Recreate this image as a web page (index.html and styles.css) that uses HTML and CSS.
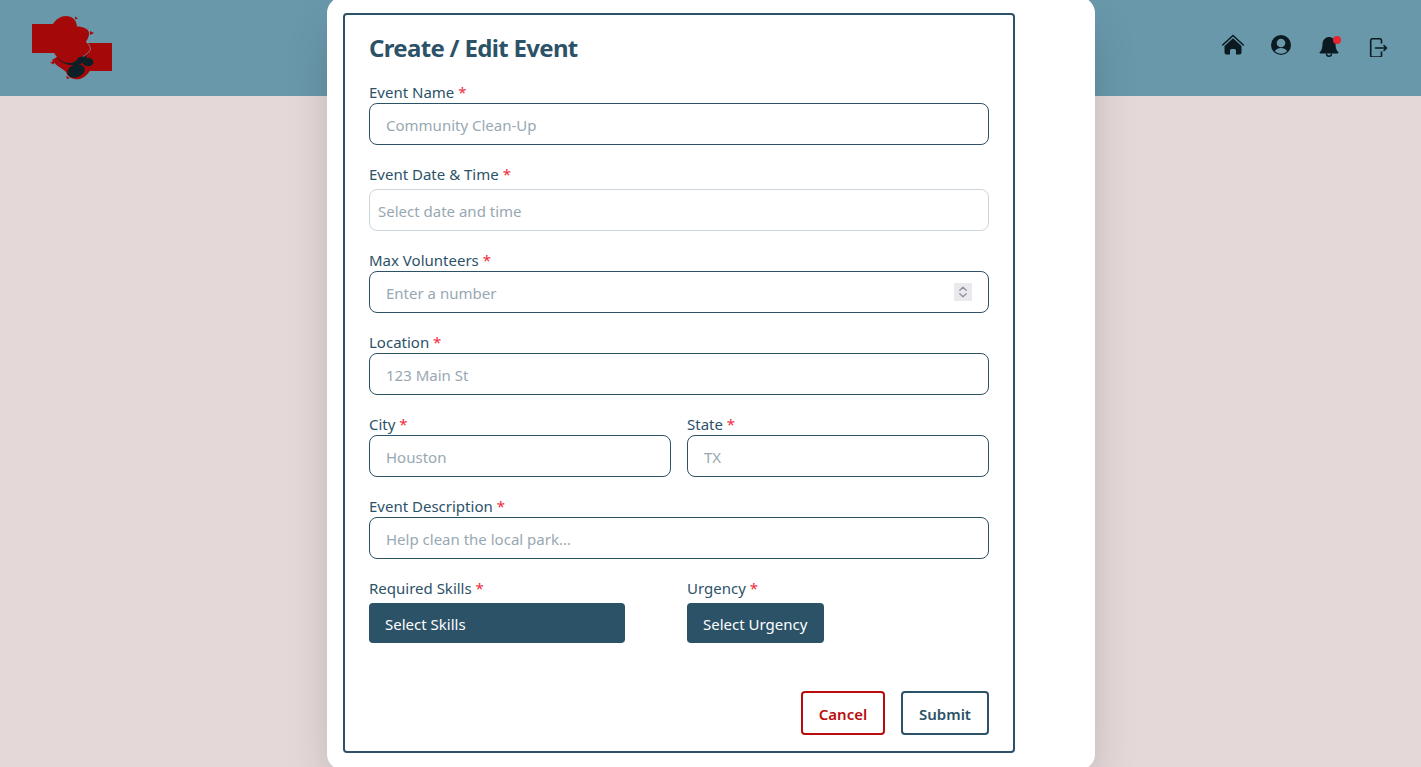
FILE: index.html
```html
<!DOCTYPE html>
<html lang="en">
<head>
<meta charset="utf-8">
<title>Create / Edit Event</title>
<link rel="stylesheet" href="styles.css">
</head>
<body>
<header class="topbar">
  <svg class="logo" width="80" height="64" viewBox="32 16 80 64" aria-label="Logo">
    <rect x="32" y="24" width="30" height="29" fill="#a50808"/>
    <rect x="80" y="43" width="32" height="28" fill="#a50808"/>
    <path d="M52 60c4 6 10 8 14 12 2 6 8 8 14 7 6-2 10-7 12-13l-2-11-30 0z" fill="#a50808"/>
    <path d="M57 57c3 6 12 9 20 8 6-1 9-5 10-10l-10-3-17 0z" fill="#0d2027"/>
    <ellipse cx="88" cy="62" rx="5.500" ry="4.300" fill="#0d2027"/>
    <ellipse cx="76" cy="71" rx="9" ry="6.300" transform="rotate(-18 76 71)" fill="#0d2027"/>
    <path d="M53 24C56 19 61 16 66 16c6 0 10.500 4 11 10.500 6 0 11.500 2.500 12 6 .5 3.500-1.500 7-3 9 3 2.500 4.500 5.500 4.500 8-2 3-5 6-7.500 7-1.500 0-3 .5-4.500 1-1.500 2.500-3.500 5-7.500 5.500-5 .5-10-1.500-13-5-2-2-3.500-4.500-5.500-7z" fill="#a50808"/>
    <path d="M86 41.500c3 2.500 4.500 5.500 4.500 8-2 3-5 6-7.500 7" fill="none" stroke="#8aa3b3" stroke-width=".7"/>
    <path d="M90 31l4 2-4 2zM54 61l-4 1.500 4 2zM66 76l1 3 3-1zM75 16.500l3 2-3 1z" fill="#a50808"/>
  </svg>
  <nav class="nav-icons">
    <svg class="icon" viewBox="0 0 24 24"><path d="M1.700 12 12 2.500 22.300 12" fill="none" stroke="#0b1a20" stroke-width="1.600" stroke-linecap="round" stroke-linejoin="round"/><path d="M12 5.300 20.500 13v6.500a2 2 0 0 1-2 2H15v-4a1.500 1.500 0 0 0-1.500-1.500h-3A1.500 1.500 0 0 0 9 17.500v4H5.500a2 2 0 0 1-2-2V13z" fill="#0b1a20"/></svg>
    <svg class="icon" viewBox="0 0 24 24"><circle cx="12" cy="12" r="10" fill="#0b1a20"/><circle cx="12" cy="10" r="4.300" fill="#6998ab"/><path d="M5.800 18c1.500-2 3.600-3 6.200-3s4.700 1 6.200 3c-1.600 1.700-3.800 2.700-6.200 2.700S7.400 19.700 5.800 18z" fill="#6998ab"/></svg>
    <span class="bell">
      <svg class="icon" viewBox="0 0 24 24"><path d="M12 4.500c-3.800 0-6 2.800-6 6.500 0 4-1 6.500-3 8.500v.5h18v-.5c-2-2-3-4.500-3-8.500 0-3.700-2.200-6.500-6-6.500z" fill="#0b1a20" stroke="#0b1a20" stroke-width="1" stroke-linejoin="round"/><path d="M9.500 20.500a2.500 2.800 0 0 0 5 0" fill="none" stroke="#0b1a20" stroke-width="1.400"/></svg>
      <span class="badge"></span>
    </span>
    <svg class="icon" viewBox="0 0 24 24" fill="none" stroke="#0b1a20" stroke-width="1.600" stroke-linecap="round" stroke-linejoin="round"><path d="M16.500 10V7.500A1.800 1.800 0 0 0 14.700 5.800H7.500a1.800 1.800 0 0 0-1.800 1.700v14.700A1.800 1.800 0 0 0 7.500 24h7.200a1.800 1.800 0 0 0 1.800-1.800V19"/><path d="M10.500 15H21.500M19 12.500 21.500 15 19 17.500"/></svg>
  </nav>
</header>

<main class="page"></main>

<section class="modal">
  <form class="card">
    <h2 class="title">Create / Edit Event</h2>

    <div class="field">
      <label class="label">Event Name <span class="req">*</span></label>
      <input class="input" type="text" placeholder="Community Clean-Up">
    </div>

    <div class="field">
      <label class="label label-spaced">Event Date &amp; Time <span class="req">*</span></label>
      <input class="input input-date" type="text" placeholder="Select date and time">
    </div>

    <div class="field">
      <label class="label">Max Volunteers <span class="req">*</span></label>
      <div class="number-wrap">
        <input class="input input-number" type="number" placeholder="Enter a number">
        <span class="spinner">
          <svg width="18" height="18" viewBox="0 0 18 18" fill="none" stroke="#8f8f9d" stroke-width="1.300" stroke-linecap="round" stroke-linejoin="round"><path d="M5.800 7.200 9 4.200l3.200 3M5.800 10.800 9 13.800l3.200-3"/></svg>
        </span>
      </div>
    </div>

    <div class="field">
      <label class="label">Location <span class="req">*</span></label>
      <input class="input" type="text" placeholder="123 Main St">
    </div>

    <div class="field-row">
      <div>
        <label class="label">City <span class="req">*</span></label>
        <input class="input" type="text" placeholder="Houston">
      </div>
      <div>
        <label class="label">State <span class="req">*</span></label>
        <input class="input" type="text" placeholder="TX">
      </div>
    </div>

    <div class="field">
      <label class="label">Event Description <span class="req">*</span></label>
      <input class="input" type="text" placeholder="Help clean the local park...">
    </div>

    <div class="field-row">
      <div>
        <label class="label label-spaced">Required Skills <span class="req">*</span></label>
        <button class="dropdown dropdown-wide" type="button">Select Skills</button>
      </div>
      <div>
        <label class="label label-spaced">Urgency <span class="req">*</span></label>
        <button class="dropdown dropdown-urgency" type="button">Select Urgency</button>
      </div>
    </div>

    <div class="actions">
      <button class="btn btn-cancel" type="button">Cancel</button>
      <button class="btn btn-submit" type="submit">Submit</button>
    </div>
  </form>
</section>
</body>
</html>
```
FILE: styles.css
```css
* { box-sizing: border-box; }
html, body { margin: 0; height: 100%; overflow: hidden; }
body {
  background: #e4d9d8;
  font-family: "Noto Sans", "Open Sans", sans-serif;
  color: #2c5268;
}
.topbar {
  height: 96px;
  background: #6998ab;
  display: flex;
  justify-content: space-between;
  align-items: center;
  padding: 0 32px;
}
.logo { display: block; }
.nav-icons {
  display: flex;
  gap: 24px;
  margin-bottom: 6px;
}
.icon { display: block; width: 24px; height: 24px; }
.bell { position: relative; display: block; }
.badge {
  position: absolute;
  top: 3px;
  left: 16px;
  width: 8px;
  height: 8px;
  border-radius: 50%;
  background: #e5252f;
}
.modal {
  position: absolute;
  left: 327px;
  top: -3px;
  width: 768px;
  height: 773px;
  padding: 16px;
  background: #fff;
  border-radius: 16px;
  box-shadow: 0 25px 50px -12px rgba(0, 0, 0, .25);
}
.card {
  width: 672px;
  height: 740px;
  border: 2px solid #2c5268;
  border-radius: 4px;
  padding: 17px 24px 16px;
  display: flex;
  flex-direction: column;
}
.title {
  margin: 0 0 15px;
  font-size: 24px;
  line-height: 32px;
  font-weight: 700;
  letter-spacing: -0.68px;
}
.field { margin-bottom: 16px; }
.field-row {
  display: grid;
  grid-template-columns: 1fr 1fr;
  gap: 16px;
  margin-bottom: 16px;
}
.label {
  display: block;
  padding-top: 2px;
  font-size: 15px;
  line-height: 22px;
}
.label-spaced { margin-bottom: 4px; }
.req { color: #ef2b3c; }
.number-wrap { position: relative; }
.spinner {
  position: absolute;
  top: 12px;
  right: 17px;
  width: 18px;
  height: 18px;
  background: #e9e9ee;
}
.spinner svg { display: block; }
.input {
  display: block;
  width: 100%;
  height: 42px;
  padding: 2px 16px 0;
  border: 1px solid #2c5268;
  border-radius: 8px;
  background: #fff;
  font: inherit;
  font-size: 15px;
  color: #2c5268;
  outline: none;
}
.input::placeholder { color: #98a8b3; opacity: 1; }
.input-date { padding: 2px 8px 0; border-color: #cdd5dc; }
.input-number { appearance: textfield; }
.dropdown {
  display: block;
  height: 40px;
  padding: 2px 16px 0;
  border: 0;
  border-radius: 4px;
  background: #2c5268;
  color: #fff;
  font: inherit;
  font-size: 15px;
  text-align: left;
}
.dropdown-wide { width: 256px; }
.dropdown-urgency { width: 137px; }
.actions {
  display: flex;
  justify-content: flex-end;
  gap: 16px;
  margin-top: 32px;
}
.btn {
  height: 44px;
  padding: 2px 0 0;
  background: #fff;
  border: 2px solid;
  border-radius: 4px;
  font: inherit;
  font-size: 15px;
  font-weight: 600;
}
.btn-cancel { width: 84px; color: #b80d0d; border-color: #b80d0d; }
.btn-submit { width: 88px; color: #2c5268; border-color: #2c5268; }
```
